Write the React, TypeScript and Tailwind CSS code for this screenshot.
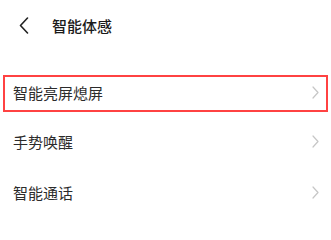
import React from 'react';

const Chevron: React.FC<{ dir: 'left' | 'right' }> = ({ dir }) =>
  dir === 'left' ? (
    <svg viewBox="0 0 10 17" className="w-[10px] h-[17px]" fill="none" stroke="#222" strokeWidth="1.6" strokeLinecap="round" strokeLinejoin="round">
      <path d="M8.5 1 L1.5 8.5 L8.5 16" />
    </svg>
  ) : (
    <svg viewBox="0 0 7 13" className="w-[7px] h-[13px]" fill="none" stroke="#c6c6c6" strokeWidth="1.2" strokeLinecap="round" strokeLinejoin="round">
      <path d="M1 1 L6 6.5 L1 12" />
    </svg>
  );

const App: React.FC = () => {
  const items = ['手势唤醒', '智能通话'];

  return (
    <div className="w-[331px] h-[216px] bg-white overflow-hidden text-[#2b2b2b]" style={{ fontFamily: '"Noto Sans CJK SC", "Noto Sans", sans-serif' }}>
      {/* Header */}
      <div className="h-[50px] flex items-center">
        <div className="pl-[19px] w-[52px] flex items-center">
          <Chevron dir="left" />
        </div>
        <span className="text-[15px] font-medium leading-none text-[#1a1a1a]">智能体感</span>
      </div>

      {/* Highlighted row */}
      <div className="h-[67px] px-[3px] pt-[25px] pb-[5px]">
        <div className="h-[37px] border-2 border-[#ff4242] flex items-center justify-between pl-[8px] pr-[7px] pb-[3px]">
          <span className="text-[15px] leading-none">智能亮屏熄屏</span>
          <Chevron dir="right" />
        </div>
      </div>

      {/* Other rows */}
      {items.map((label) => (
        <div key={label} className="h-[51px] flex items-center justify-between pl-[13px] pr-[12px] pb-[3px]">
          <span className="text-[15px] leading-none">{label}</span>
          <Chevron dir="right" />
        </div>
      ))}
    </div>
  );
};

export default App;
